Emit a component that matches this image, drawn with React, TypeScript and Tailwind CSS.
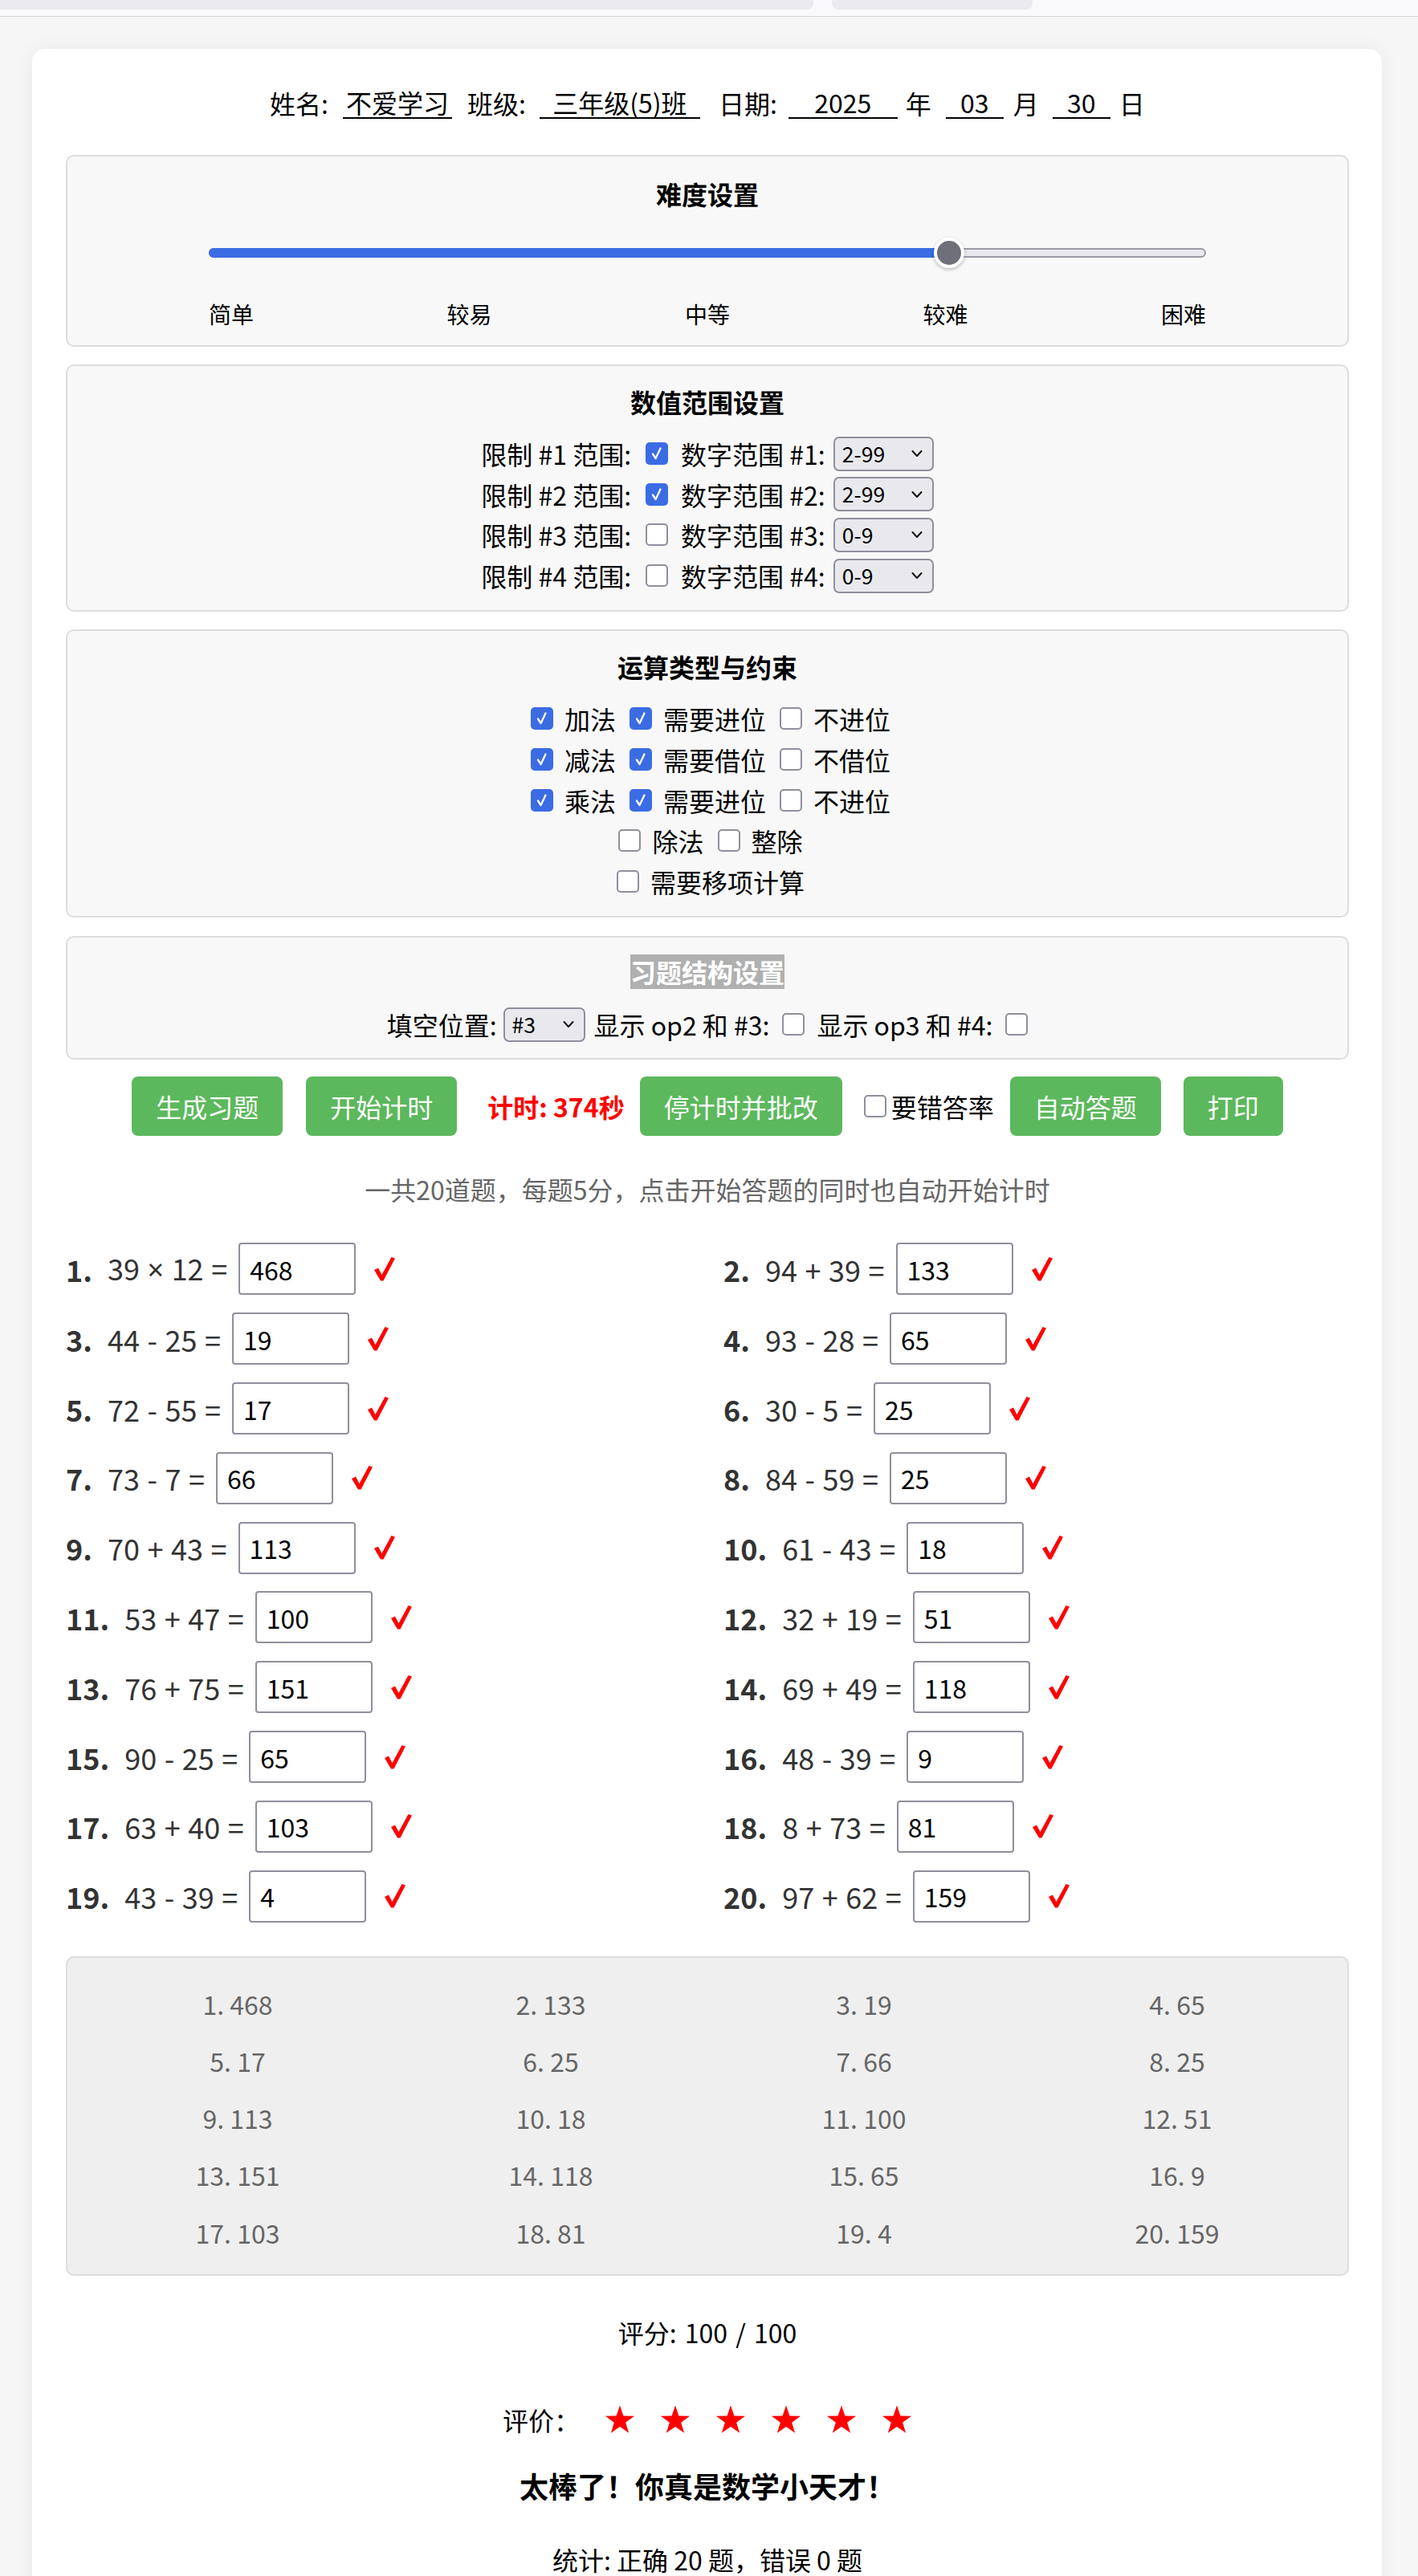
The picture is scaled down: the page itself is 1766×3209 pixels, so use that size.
import React from "react";

const problems: [string, string][] = [
  ["39 × 12 =", "468"],
  ["94 + 39 =", "133"],
  ["44 - 25 =", "19"],
  ["93 - 28 =", "65"],
  ["72 - 55 =", "17"],
  ["30 - 5 =", "25"],
  ["73 - 7 =", "66"],
  ["84 - 59 =", "25"],
  ["70 + 43 =", "113"],
  ["61 - 43 =", "18"],
  ["53 + 47 =", "100"],
  ["32 + 19 =", "51"],
  ["76 + 75 =", "151"],
  ["69 + 49 =", "118"],
  ["90 - 25 =", "65"],
  ["48 - 39 =", "9"],
  ["63 + 40 =", "103"],
  ["8 + 73 =", "81"],
  ["43 - 39 =", "4"],
  ["97 + 62 =", "159"],
];

function Checkbox({ checked = false, className = "" }: { checked?: boolean; className?: string }) {
  if (checked) {
    return (
      <span className={"inline-flex h-[28px] w-[28px] shrink-0 items-center justify-center rounded-[5px] bg-[#3b6ce3] " + className}>
        <svg width="18" height="20" viewBox="0 0 18 20">
          <path d="M4 10.5 L7.6 16 L13.5 3.5" fill="none" stroke="white" strokeWidth="2.3" strokeLinecap="round" strokeLinejoin="round" />
        </svg>
      </span>
    );
  }
  return <span className={"inline-block h-[28px] w-[28px] shrink-0 rounded-[5px] border-2 border-[#8f8f9d] bg-white " + className} />;
}

function Select({ value, className = "" }: { value: string; className?: string }) {
  return (
    <span className={"inline-flex h-[43px] shrink-0 items-center justify-between rounded-[7px] border-2 border-[#8f8f9d] bg-[#e9e9ed] pl-[9px] pr-[12px] text-[26.67px] leading-none text-black " + className}>
      <span>{value}</span>
      <svg width="14" height="10" viewBox="0 0 14 10">
        <path d="M1.5 2 L7 8 L12.5 2" fill="none" stroke="#111" strokeWidth="2" strokeLinecap="round" strokeLinejoin="round" />
      </svg>
    </span>
  );
}

function RedCheck() {
  return (
    <svg className="ml-[23px] shrink-0" width="26" height="30" viewBox="0 0 26 30">
      <polygon points="0,16 5,13.5 9.5,22 21.5,0 26,1.5 11.5,29.5 8,29.5" fill="#ff0000" />
    </svg>
  );
}

function Star() {
  return (
    <svg width="38" height="36" viewBox="0 0 38 36">
      <polygon
        points="19,0.5 23.41,13.43 37.07,13.63 26.13,21.82 30.17,34.87 19,27 7.83,34.87 11.87,21.82 0.93,13.63 14.59,13.43"
        fill="#ff0000"
      />
    </svg>
  );
}

function HeaderInput({ value, className = "" }: { value: string; className?: string }) {
  return (
    <span className={"inline-flex h-[40px] shrink-0 items-center justify-center border-b-2 border-black text-[32px] leading-none " + className}>
      {value}
    </span>
  );
}

function Equation({ eq }: { eq: string }) {
  const parts = eq.split("×");
  if (parts.length === 1) return <span className="ml-[19px] [word-spacing:1.5px]">{eq}</span>;
  return (
    <span className="ml-[19px] [word-spacing:1.5px]">
      {parts[0]}
      <span className="font-['Noto_Sans',sans-serif]">×</span>
      {parts[1]}
    </span>
  );
}

export default function App() {
  return (
    <div className="min-h-[3209px] bg-[#f6f6f6] font-['Noto_Sans_CJK_SC','Noto_Sans',sans-serif] text-black">
      {/* top strip */}
      <div className="flex h-[21px] border-b border-[#d4d4d9] bg-[#f9f9fb]">
        <div className="h-[12px] w-[1013px] rounded-br-[8px] bg-[#ebebef]" />
        <div className="ml-[23px] h-[12px] w-[250px] rounded-b-[8px] bg-[#ebebef]" />
      </div>

      <div className="ml-[40px] mt-[40px] w-[1681px] rounded-[16px] bg-white pb-[60px] pl-[42px] pr-[41px] pt-[45px] shadow-[0_0_24px_rgba(0,0,0,0.06)]">
        {/* header */}
        <div className="flex h-[44px] items-center justify-center text-[32px] leading-none">
          <span>姓名:</span>
          <HeaderInput value="不爱学习" className="ml-[18px] w-[136px]" />
          <span className="ml-[19px]">班级:</span>
          <HeaderInput value="三年级(5)班" className="ml-[17px] w-[200px]" />
          <span className="ml-[23px]">日期:</span>
          <HeaderInput value="2025" className="ml-[14px] w-[136px]" />
          <span className="ml-[10px]">年</span>
          <HeaderInput value="03" className="ml-[18px] w-[72px]" />
          <span className="ml-[12px]">月</span>
          <HeaderInput value="30" className="ml-[17px] w-[72px]" />
          <span className="ml-[11px]">日</span>
        </div>

        {/* difficulty */}
        <div className="mt-[43px] rounded-[10px] border-2 border-[#dddddd] bg-[#f8f8f8] pb-[21px] pt-[24px]">
          <div className="text-center text-[32px] font-bold leading-[44px]">难度设置</div>
          <div className="relative mx-auto mt-[32px] flex h-[40px] w-[1242px] items-center">
            <div className="relative h-[12px] w-full rounded-full border-2 border-[#9a9aa6] bg-[#e8e8ee]">
              <div className="absolute left-[-2px] top-[-2px] h-[12px] w-[924px] rounded-l-full bg-[#3b6ce3]" />
            </div>
            <div className="absolute left-[903px] top-[1px] h-[38px] w-[38px] rounded-full border-[4px] border-white bg-[#6f6f7a] shadow-[0_2px_4px_rgba(0,0,0,0.25)]" />
          </div>
          <div className="mx-auto mt-[38px] flex h-[36px] w-[1242px] items-center justify-between text-[28px] leading-none">
            <span>简单</span>
            <span>较易</span>
            <span>中等</span>
            <span>较难</span>
            <span>困难</span>
          </div>
        </div>

        {/* range */}
        <div className="mt-[22px] rounded-[10px] border-2 border-[#dddddd] bg-[#f8f8f8] pb-[17.7px] pt-[22px]">
          <div className="text-center text-[32px] font-bold leading-[44px]">数值范围设置</div>
          <div className="mt-[17.7px]">
            {[
              ["1", true, "2-99"],
              ["2", true, "2-99"],
              ["3", false, "0-9"],
              ["4", false, "0-9"],
            ].map(([n, c, v]) => (
              <div key={n as string} className="flex h-[50.7px] items-center justify-center text-[32px] leading-none">
                <span>限制 #{n as string} 范围:</span>
                <Checkbox checked={c as boolean} className="ml-[18px]" />
                <span className="ml-[16px]">数字范围 #{n as string}:</span>
                <Select value={v as string} className="ml-[10px] w-[125px]" />
              </div>
            ))}
          </div>
        </div>

        {/* operations */}
        <div className="mt-[22px] rounded-[10px] border-2 border-[#dddddd] bg-[#f8f8f8] pb-[17.6px] pt-[22px]">
          <div className="text-center text-[32px] font-bold leading-[44px]">运算类型与约束</div>
          <div className="mt-[17.6px] text-[32px] leading-none">
            {[
              ["加法", "需要进位", "不进位"],
              ["减法", "需要借位", "不借位"],
              ["乘法", "需要进位", "不进位"],
            ].map(([a, b, c], i) => (
              <div key={i} className="flex h-[50.75px] items-center justify-center">
                <Checkbox checked className="ml-[8px]" />
                <span className="ml-[14px]">{a}</span>
                <Checkbox checked className="ml-[17px]" />
                <span className="ml-[14px]">{b}</span>
                <Checkbox className="ml-[17px]" />
                <span className="ml-[14px]">{c}</span>
              </div>
            ))}
            <div className="flex h-[50.75px] items-center justify-center">
              <Checkbox className="ml-[8px]" />
              <span className="ml-[14px]">除法</span>
              <Checkbox className="ml-[17px]" />
              <span className="ml-[14px]">整除</span>
            </div>
            <div className="flex h-[50.75px] items-center justify-center">
              <Checkbox className="ml-[8px]" />
              <span className="ml-[14px]">需要移项计算</span>
            </div>
          </div>
        </div>

        {/* structure */}
        <div className="mt-[23px] rounded-[10px] border-2 border-[#dddddd] bg-[#f8f8f8] pb-[16.6px] pt-[20px]">
          <div className="flex h-[44px] items-center justify-center">
            <span className="bg-[#b0b0b0] text-[32px] font-bold leading-[43px] text-white">习题结构设置</span>
          </div>
          <div className="mt-[18.6px] flex h-[50.7px] items-center justify-center text-[32px] leading-none">
            <span>填空位置:</span>
            <Select value="#3" className="ml-[8px] w-[102px]" />
            <span className="ml-[11px]">显示 op2 和 #3:</span>
            <Checkbox className="ml-[16px]" />
            <span className="ml-[15px]">显示 op3 和 #4:</span>
            <Checkbox className="ml-[16px]" />
          </div>
        </div>

        {/* buttons */}
        <div className="mt-[21px] flex h-[74px] items-center justify-center text-[32px] leading-none">
          <span className="flex h-[74px] items-center rounded-[8px] bg-[#5cb85c] px-[30px] text-white">生成习题</span>
          <span className="ml-[29px] flex h-[74px] items-center rounded-[8px] bg-[#5cb85c] px-[30px] text-white">开始计时</span>
          <span className="ml-[38px] font-bold text-[#ff0000]">计时: 374秒</span>
          <span className="ml-[19px] flex h-[74px] items-center rounded-[8px] bg-[#5cb85c] px-[30px] text-white">停计时并批改</span>
          <Checkbox className="ml-[27px]" />
          <span className="ml-[6px]">要错答率</span>
          <span className="ml-[20px] flex h-[74px] items-center rounded-[8px] bg-[#5cb85c] px-[30px] text-white">自动答题</span>
          <span className="ml-[28px] flex h-[74px] items-center rounded-[8px] bg-[#5cb85c] px-[30px] text-white">打印</span>
        </div>

        {/* info */}
        <div className="mt-[44px] text-center text-[32px] leading-[44px] text-[#666666]">
          一共20道题，每题5分，点击开始答题的同时也自动开始计时
        </div>

        {/* problems */}
        <div className="mt-[45.5px] grid grid-cols-2 gap-x-[40px] gap-y-[21.8px]">
          {problems.map(([eq, ans], i) => (
            <div key={i} className="flex h-[65px] items-center text-[36px] leading-none text-[#333333]">
              <span className="font-bold">{i + 1}.</span>
              <Equation eq={eq} />
              <span className="ml-[14px] flex h-[65px] w-[146px] shrink-0 items-center rounded-[4px] border-2 border-[#8f8f9d] bg-white pl-[12px] text-[32px] text-black">
                {ans}
              </span>
              <RedCheck />
            </div>
          ))}
        </div>

        {/* answers */}
        <div className="mt-[42.3px] grid grid-cols-4 rounded-[10px] border-2 border-[#dddddd] bg-[#efefef] px-[17px] pb-[17px] pt-[21px] text-[32px] leading-none text-[#666666]">
          {problems.map(([, ans], i) => (
            <div key={i} className="flex h-[71.25px] items-center justify-center">
              {i + 1}. {ans}
            </div>
          ))}
        </div>

        {/* score */}
        <div className="mt-[48px] text-center text-[32px] leading-[44px] [word-spacing:3px]">评分: 100 / 100</div>
        <div className="mt-[62px] flex h-[50px] items-center justify-center">
          <span className="text-[32px] leading-none">评价：</span>
          <div className="ml-[31px] flex items-center gap-[31px]">
            <Star />
            <Star />
            <Star />
            <Star />
            <Star />
            <Star />
          </div>
        </div>
        <div className="mt-[33px] text-center text-[36px] font-bold leading-[48px]">太棒了！你真是数学小天才！</div>
        <div className="mt-[46px] text-center text-[32px] leading-[44px]">统计: 正确 20 题，错误 0 题</div>
      </div>
    </div>
  );
}
